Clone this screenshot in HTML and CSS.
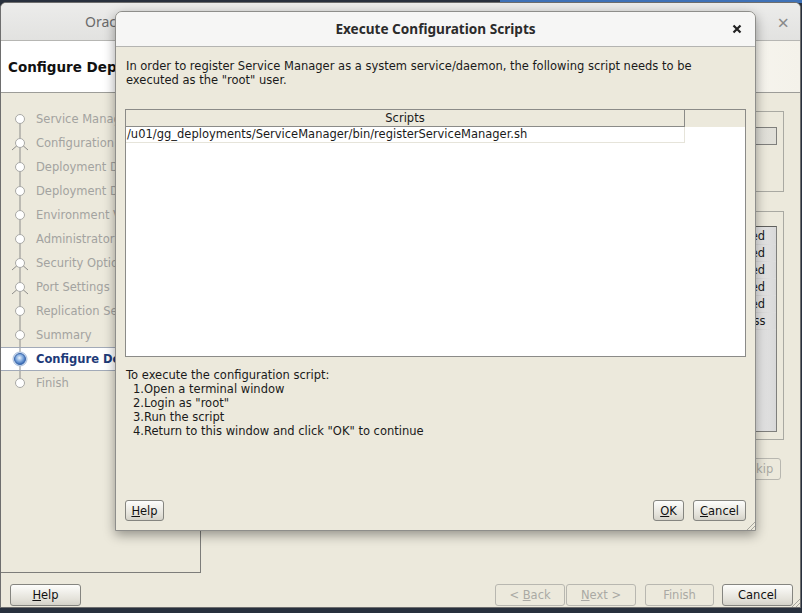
FILE: index.html
```html
<!DOCTYPE html>
<html lang="en">
<head>
    <meta charset="UTF-8">
    <title>Execute Configuration Scripts</title>
    <link rel="stylesheet" href="styles.css">
</head>
<body>

    <div class="topstrip"></div>

    <!-- ventana principal del asistente -->
    <div class="win main">
        <div class="main-title">
            <span class="main-title-text">Oracle GoldenGate Service Manager Configuration Assistant - Step 11 of 12</span>
            <span class="main-close">&times;</span>
        </div>
        <div class="main-header">Configure Deployment</div>
        <div class="main-body">
            <div class="content">
                <ul class="nav">
                    <li class="step first"><svg class="ico" viewBox="0 0 34 24"><line x1="19" y1="12" x2="19" y2="24"/><circle cx="19" cy="12" r="4.5"/></svg>Service Manager Details</li>
                    <li class="step"><svg class="ico" viewBox="0 0 34 24"><line x1="19" y1="0" x2="19" y2="24"/><path d="M19 12 L11 19 M19 12 L27 19"/><circle cx="19" cy="12" r="4.5"/></svg>Configuration Options</li>
                    <li class="step"><svg class="ico" viewBox="0 0 34 24"><line x1="19" y1="0" x2="19" y2="24"/><circle cx="19" cy="12" r="4.5"/></svg>Deployment Details</li>
                    <li class="step"><svg class="ico" viewBox="0 0 34 24"><line x1="19" y1="0" x2="19" y2="24"/><circle cx="19" cy="12" r="4.5"/></svg>Deployment Directories</li>
                    <li class="step"><svg class="ico" viewBox="0 0 34 24"><line x1="19" y1="0" x2="19" y2="24"/><circle cx="19" cy="12" r="4.5"/></svg>Environment Variables</li>
                    <li class="step"><svg class="ico" viewBox="0 0 34 24"><line x1="19" y1="0" x2="19" y2="24"/><circle cx="19" cy="12" r="4.5"/></svg>Administrator Account</li>
                    <li class="step"><svg class="ico" viewBox="0 0 34 24"><line x1="19" y1="0" x2="19" y2="24"/><path d="M19 12 L11 19 M19 12 L27 19"/><circle cx="19" cy="12" r="4.5"/></svg>Security Options</li>
                    <li class="step"><svg class="ico" viewBox="0 0 34 24"><line x1="19" y1="0" x2="19" y2="24"/><path d="M19 12 L11 19 M19 12 L27 19"/><circle cx="19" cy="12" r="4.5"/></svg>Port Settings</li>
                    <li class="step"><svg class="ico" viewBox="0 0 34 24"><line x1="19" y1="0" x2="19" y2="24"/><circle cx="19" cy="12" r="4.5"/></svg>Replication Settings</li>
                    <li class="step"><svg class="ico" viewBox="0 0 34 24"><line x1="19" y1="0" x2="19" y2="24"/><circle cx="19" cy="12" r="4.5"/></svg>Summary</li>
                    <li class="step current"><svg class="ico" viewBox="0 0 34 24"><defs><radialGradient id="cur" cx="45%" cy="40%" r="60%"><stop offset="0" stop-color="#eaf3fd"/><stop offset="0.5" stop-color="#86aee0"/><stop offset="1" stop-color="#2f62b0"/></radialGradient></defs><line x1="19" y1="0" x2="19" y2="24"/><circle class="ring" cx="19" cy="12" r="7"/><circle class="dot" cx="19" cy="12" r="5.5"/></svg>Configure Deployment</li>
                    <li class="step last"><svg class="ico" viewBox="0 0 34 24"><line x1="19" y1="0" x2="19" y2="12"/><circle cx="19" cy="12" r="4.5"/></svg>Finish</li>
                </ul>
                <div class="panel">
                    <div class="group group-top">
                        <div class="field"></div>
                    </div>
                    <div class="group group-progress">
                        <div class="tasks">
                            <div class="task-row"><span>Prepare</span><span>Succeeded</span></div>
                            <div class="task-row"><span>Copy Files</span><span>Succeeded</span></div>
                            <div class="task-row"><span>Link Binaries</span><span>Succeeded</span></div>
                            <div class="task-row"><span>Setup</span><span>Succeeded</span></div>
                            <div class="task-row"><span>Configure Service Manager</span><span>Succeeded</span></div>
                            <div class="task-row"><span>Register Service Manager</span><span>In Progress</span></div>
                        </div>
                    </div>
                    <div class="skip-row">
                        <button class="btn disabled btn-skip">Skip</button>
                    </div>
                </div>
            </div>
            <div class="footer">
                <button class="btn btn-help"><u>H</u>elp</button>
                <div class="footer-right">
                    <button class="btn disabled btn-back">&lt; <u>B</u>ack</button>
                    <button class="btn disabled btn-next"><u>N</u>ext &gt;</button>
                    <button class="btn disabled btn-finish">Finish</button>
                    <button class="btn btn-cancel">Cancel</button>
                </div>
            </div>
        </div>
        <div class="grip"></div>
    </div>

    <!-- dialogo modal -->
    <div class="win dialog">
        <div class="dlg-title">
            <span>Execute Configuration Scripts</span>
            <svg class="dlg-close" viewBox="0 0 10 10"><path d="M1.5 1.5 L8.5 8.5 M8.5 1.5 L1.5 8.5"/></svg>
        </div>
        <div class="dlg-body">
            <p class="intro">In order to register Service Manager as a system service/daemon, the following script needs to be<br>executed as the "root" user.</p>

            <div class="scripts">
                <div class="scripts-head">
                    <div class="scripts-col">Scripts</div>
                </div>
                <div class="scripts-row">
                    <div class="scripts-cell">/u01/gg_deployments/ServiceManager/bin/registerServiceManager.sh</div>
                </div>
            </div>

            <div class="steps-text">
                <div>To execute the configuration script:</div>
                <div class="num">1.Open a terminal window</div>
                <div class="num">2.Login as "root"</div>
                <div class="num">3.Run the script</div>
                <div class="num">4.Return to this window and click "OK" to continue</div>
            </div>

            <div class="dlg-buttons">
                <button class="btn btn-small btn-dhelp"><u>H</u>elp</button>
                <div class="dlg-buttons-right">
                    <button class="btn btn-small btn-ok"><u>O</u>K</button>
                    <button class="btn btn-small btn-dcancel"><u>C</u>ancel</button>
                </div>
            </div>
        </div>
        <div class="grip"></div>
    </div>

</body>
</html>
```

FILE: styles.css
```css
body {
    margin: 0;
    width: 802px;
    height: 613px;
    background-color: #28303d;
    font-family: "DejaVu Sans", sans-serif;
    font-size: 11.5px;
    color: #1a1a1a;
    position: relative;
    overflow: hidden;
}

.topstrip {
    position: absolute;
    left: 500px;
    top: 0;
    width: 302px;
    height: 3px;
    background-color: #3f72b8;
}

.win {
    position: absolute;
    box-sizing: border-box;
}

/* ventana principal */
.main {
    left: 0;
    top: 2px;
    width: 801px;
    height: 606px;
    background-color: #ece9dc;
    border: 1px solid #6e6e6e;
    border-radius: 6px 6px 0 0;
    display: flex;
    flex-direction: column;
    overflow: hidden;
}

.main-title {
    height: 37px;
    flex: none;
    background: linear-gradient(#ececeb, #e2e2e0);
    border-bottom: 1px solid #b6b6b3;
    display: flex;
    align-items: center;
    font-family: "Noto Sans", sans-serif;
    font-size: 14px;
    color: #6a6a6a;
    position: relative;
}

.main-title-text {
    padding-left: 84px;
    white-space: nowrap;
}

.main-close {
    position: absolute;
    right: 11px;
    top: 6px;
    font-size: 20px;
    color: #8a8a8a;
}

.main-header {
    height: 52px;
    flex: none;
    box-sizing: border-box;
    background: linear-gradient(90deg, #ffffff 60%, #f4f2ea);
    border-bottom: 1px solid #9c9c98;
    padding: 18px 0 0 7px;
    font-size: 13.5px;
    font-weight: bold;
    color: #111;
}

.main-body {
    flex: 1;
    display: flex;
    flex-direction: column;
}

.content {
    height: 480px;
    display: flex;
}

.nav {
    list-style: none;
    margin: 0;
    padding: 14px 0 0 0;
    width: 200px;
    box-sizing: border-box;
    border-right: 1px solid #7d7d7a;
    border-bottom: 1px solid #7d7d7a;
}

.step {
    height: 24px;
    display: flex;
    align-items: center;
    color: #a3a3a0;
    white-space: nowrap;
    overflow: hidden;
    box-sizing: border-box;
}

.ico {
    width: 34px;
    height: 24px;
    flex: none;
    margin-right: 1px;
}

.ico line,
.ico path {
    stroke: #8c8c8a;
    stroke-width: 1;
    fill: none;
}

.ico circle {
    fill: #ffffff;
    stroke: #a9a9a6;
    stroke-width: 1;
}

.step.current {
    background-color: #ffffff;
    border-top: 1px solid #a2aab8;
    border-bottom: 1px solid #a2aab8;
    color: #1d3a78;
    font-weight: bold;
}

.ico .ring {
    fill: #dde7f4;
    stroke: #a9bedb;
}

.ico .dot {
    fill: url(#cur);
    stroke: #3a68ad;
}

.panel {
    flex: 1;
    padding: 18px 16px 0 14px;
}

.group {
    border: 1px solid #a9a9a2;
    box-sizing: border-box;
}

.group-top {
    height: 81px;
    padding: 15px 6px 0 6px;
}

.field {
    height: 18px;
    box-sizing: border-box;
    border: 1px solid #7f7f7c;
    background: linear-gradient(90deg, #f8f8f6, #e0dfd8);
}

.group-progress {
    margin-top: 19px;
    height: 229px;
    padding: 14px 6px 7px 6px;
}

.tasks {
    height: 100%;
    box-sizing: border-box;
    border: 1px solid #7f7f7c;
    border-top-color: #5f5f5c;
    background: linear-gradient(90deg, #ffffff 92%, #d8d8d8);
    padding-top: 1px;
}

.task-row {
    height: 16px;
    display: grid;
    grid-template-columns: 1fr 76px;
    align-items: center;
    border-bottom: 1px solid #dcdcdc;
    white-space: nowrap;
    overflow: hidden;
}

.task-row span {
    padding-left: 2px;
}

.skip-row {
    display: flex;
    justify-content: flex-end;
    margin-top: 18px;
    margin-right: 3px;
}

.btn-skip {
    width: 40px;
}

.footer {
    display: flex;
    justify-content: space-between;
    padding: 11px 7px 0 9px;
}

.footer-right {
    display: flex;
}

.btn {
    font-family: "DejaVu Sans", sans-serif;
    font-size: 11.5px;
    color: #111;
    height: 22px;
    padding: 0 4px;
    border: 1px solid #858580;
    border-radius: 3px;
    background: linear-gradient(#fdfdfb, #e4e2da 70%, #d4d2c9);
}

.btn.disabled {
    color: #aaa9a4;
    border-color: #b8b7b0;
    background: #ece9dc;
}

.btn-help {
    width: 71px;
}

.btn-back {
    width: 70px;
}

.btn-next {
    width: 70px;
    margin-left: 1px;
}

.btn-finish {
    width: 69px;
    margin-left: 9px;
}

.btn-cancel {
    width: 71px;
    margin-left: 8px;
}

.grip {
    position: absolute;
    right: 0;
    bottom: 0;
    width: 10px;
    height: 10px;
    background: repeating-linear-gradient(135deg, transparent 0 2px, #a5a49c 2px 3px);
    clip-path: polygon(100% 0, 100% 100%, 0 100%);
}

/* dialogo */
.dialog {
    left: 115px;
    top: 11px;
    width: 641px;
    height: 520px;
    border: 1px solid #8e8e8b;
    border-radius: 7px 7px 0 0;
    background-color: #ece9dc;
    box-shadow: 0 4px 12px rgba(0, 0, 0, 0.38);
    display: flex;
    flex-direction: column;
    overflow: hidden;
}

.dlg-title {
    height: 35px;
    flex: none;
    box-sizing: border-box;
    padding-bottom: 2px;
    background-color: #f6f6f5;
    border-bottom: 1px solid #b4b4b1;
    display: flex;
    align-items: center;
    justify-content: center;
    font-family: "Noto Sans", sans-serif;
    font-size: 13.6px;
    font-weight: bold;
    color: #2b2b2b;
    position: relative;
}

.dlg-close {
    position: absolute;
    right: 13px;
    top: 12px;
    width: 10px;
    height: 10px;
}

.dlg-close path {
    stroke: #222;
    stroke-width: 2.2;
    fill: none;
}

.dlg-body {
    flex: 1;
    display: flex;
    flex-direction: column;
    padding: 12px 9px 9px 9px;
}

.intro {
    margin: 0 0 0 1px;
    line-height: 14px;
}

.scripts {
    margin-top: 22px;
    height: 248px;
    box-sizing: border-box;
    border: 1px solid #8b8b88;
    background-color: #ffffff;
}

.scripts-head {
    height: 17px;
    background-color: #ece9dc;
}

.scripts-col {
    width: 559px;
    height: 17px;
    box-sizing: border-box;
    border-right: 1px solid #8b8b88;
    border-bottom: 1px solid #8b8b88;
    text-align: center;
    line-height: 16px;
}

.scripts-row {
    width: 559px;
    height: 16px;
    box-sizing: border-box;
    border-right: 1px solid #e6e4da;
    border-bottom: 1px solid #e6e4da;
}

.scripts-cell {
    line-height: 15px;
    padding-left: 1px;
    white-space: nowrap;
}

.steps-text {
    margin-top: 11px;
    line-height: 14px;
    padding-left: 1px;
}

.steps-text .num {
    padding-left: 7px;
}

.dlg-buttons {
    margin-top: auto;
    display: flex;
    justify-content: space-between;
}

.dlg-buttons-right {
    display: flex;
    gap: 9px;
}

.btn-small {
    height: 21px;
    padding: 0 2px;
}

.btn-dhelp {
    width: 39px;
}

.btn-ok {
    width: 31px;
}

.btn-dcancel {
    width: 53px;
}
```
